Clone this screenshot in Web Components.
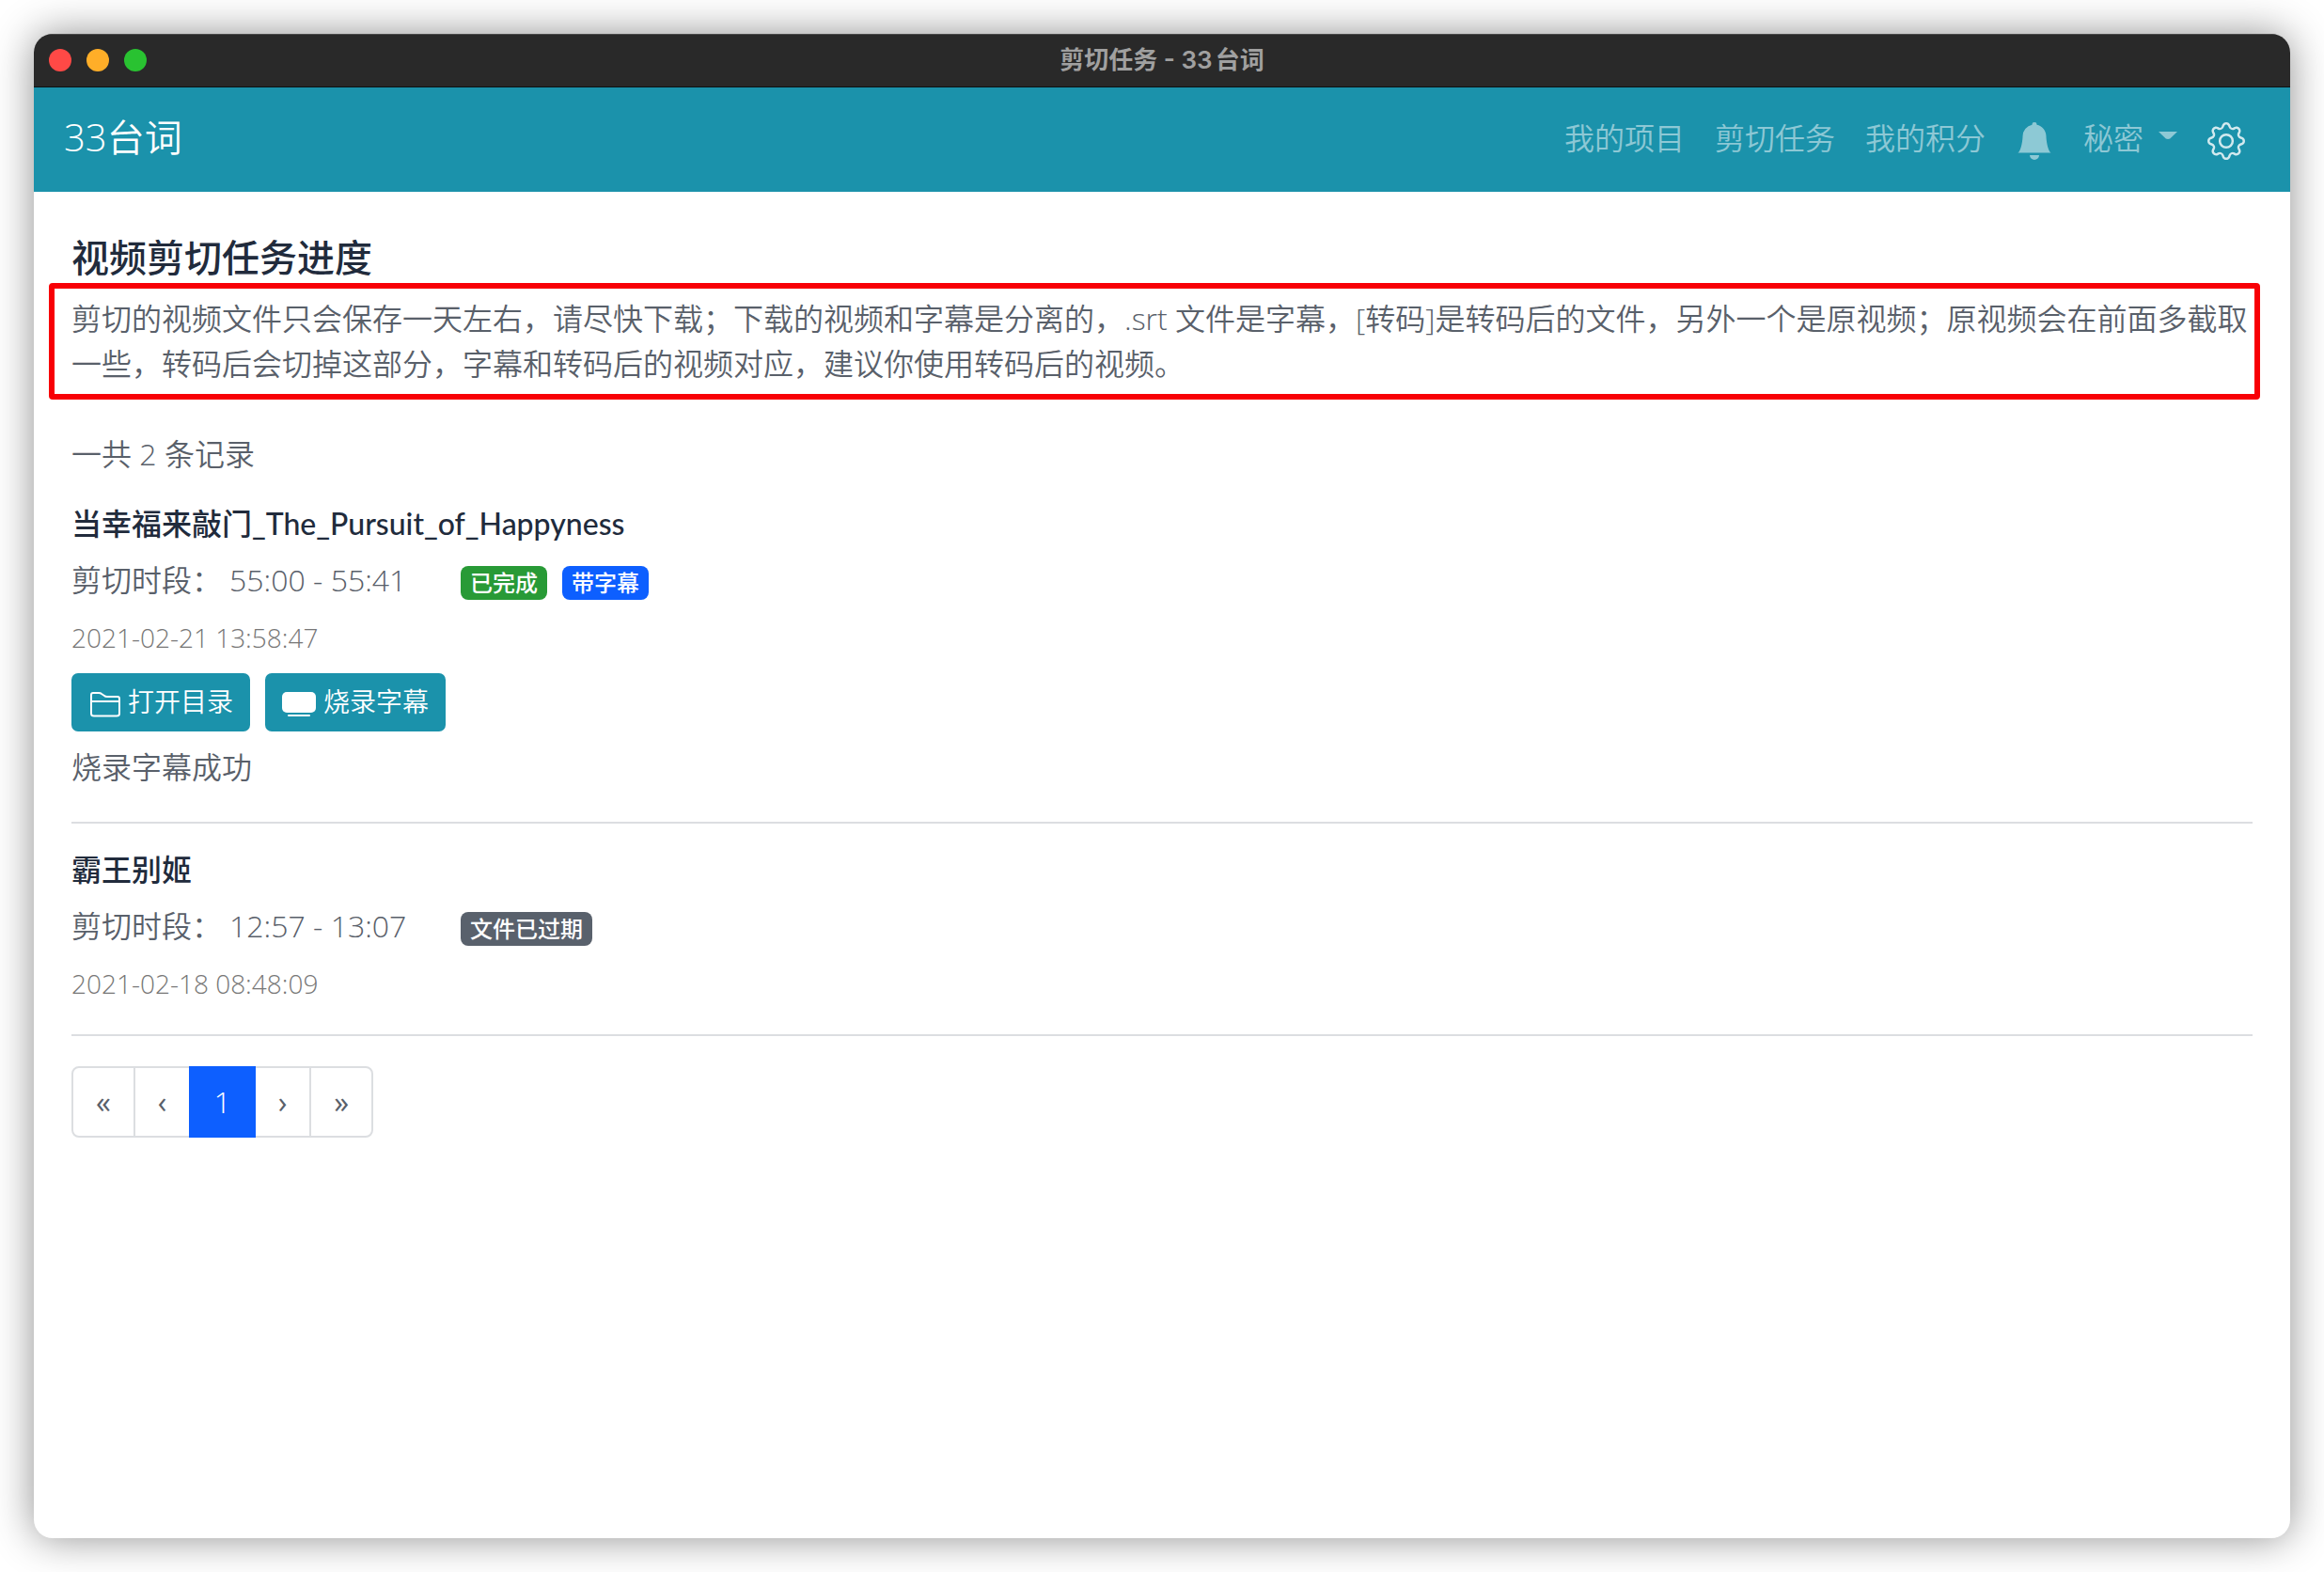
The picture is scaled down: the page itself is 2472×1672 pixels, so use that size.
<!DOCTYPE html>
<html lang="zh-CN">
<head>
<meta charset="utf-8">
<meta name="viewport" content="width=device-width, initial-scale=1">
<title>剪切任务 - 33台词</title>
<style>
  html, body { margin: 0; height: 100%; }
  body {
    --teal: #1b92ab;
    --ink: #212b3c;
    --body: #59606a;
    --blue: #0d5fff;
    --line: #dcdee1;
    --title: Lato, "Noto Sans CJK SC", sans-serif;
    background: #fff;
    color: var(--body);
    font-family: "Open Sans", "Noto Sans CJK SC", sans-serif;
    font-size: 32px;
    font-weight: 350;
    line-height: 48px;
  }
</style>
</head>
<body>
<app-window>
  <title-bar slot="bar">剪切任务 - 33台词</title-bar>
  <nav-bar brand="33台词">
    <nav-link>我的项目</nav-link>
    <nav-link>剪切任务</nav-link>
    <nav-link>我的积分</nav-link>
    <bell-link></bell-link>
    <user-menu>秘密</user-menu>
    <settings-button></settings-button>
  </nav-bar>
  <task-page>
    <span slot="heading">视频剪切任务进度</span>
    <marked-note slot="note">剪切的视频文件只会保存一天左右，请尽快下载；下载的视频和字幕是分离的，.srt 文件是字幕，[转码]是转码后的文件，另外一个是原视频；原视频会在前面多截取一些，转码后会切掉这部分，字幕和转码后的视频对应，建议你使用转码后的视频。</marked-note>
    <span slot="count">一共 2 条记录</span>
    <clip-task name="当幸福来敲门_The_Pursuit_of_Happyness" span="55:00 - 55:41" time="2021-02-21 13:58:47">
      <status-badge slot="badge" tone="done">已完成</status-badge>
      <status-badge slot="badge" tone="info">带字幕</status-badge>
      <action-button slot="action" icon="folder">打开目录</action-button>
      <action-button slot="action" icon="screen">烧录字幕</action-button>
      <span slot="result">烧录字幕成功</span>
    </clip-task>
    <clip-task name="霸王别姬" span="12:57 - 13:07" time="2021-02-18 08:48:09">
      <status-badge slot="badge" tone="expired">文件已过期</status-badge>
    </clip-task>
    <page-nav></page-nav>
  </task-page>
</app-window>

<script>
function define(name, html, setup) {
  const template = document.createElement('template');
  template.innerHTML = html;
  customElements.define(name, class extends HTMLElement {
    constructor() {
      super();
      this.attachShadow({ mode: 'open' }).append(template.content.cloneNode(true));
    }
    connectedCallback() {
      if (setup) setup(this, this.shadowRoot);
    }
  });
}

define('app-window', `
  <style>
    :host { display: flex; box-sizing: border-box; min-height: 100vh; padding: 36px; }
    .frame {
      flex: 1; min-width: 0; display: flex; flex-direction: column; overflow: hidden;
      border-radius: 20px; background: #fff; box-shadow: 0 0 44px rgba(0, 0, 0, .44);
    }
  </style>
  <div class="frame"><slot name="bar"></slot><slot></slot></div>`);

define('title-bar', `
  <style>
    :host { display: block; background: #292929; border-top: 1px solid #4a4a4a; border-bottom: 1px solid #0b1214; }
    header { box-sizing: border-box; display: grid; grid-template-columns: 1fr auto 1fr; align-items: center; height: 55px; padding: 0 16px 2px; }
    .lights { display: flex; gap: 16px; }
    button { width: 24px; height: 24px; padding: 0; border: 0; border-radius: 50%; background: var(--c); }
    .title { color: #a0a0a0; font: 600 26px/32px Inter, "Noto Sans CJK SC", sans-serif; text-autospace: normal; }
  </style>
  <header>
    <div class="lights">
      <button aria-label="关闭" style="--c:#ff4946"></button>
      <button aria-label="最小化" style="--c:#ffae28"></button>
      <button aria-label="缩放" style="--c:#29c231"></button>
    </div>
    <div class="title"><slot></slot></div>
  </header>`);

define('nav-bar', `
  <style>
    :host { display: block; background: var(--teal); }
    nav { display: flex; align-items: center; justify-content: space-between; height: 111px; padding: 0 48px 0 32px; }
    .brand { color: #fff; font-size: 40px; line-height: 60px; text-decoration: none; padding-bottom: 6px; }
    .items { display: flex; align-items: center; gap: 32px; padding-top: 3px; }
  </style>
  <nav>
    <a class="brand" href="#"></a>
    <div class="items"><slot></slot></div>
  </nav>`,
  (host, root) => { root.querySelector('.brand').textContent = host.getAttribute('brand'); });

define('nav-link', `
  <style>
    :host { display: block; }
    a { display: block; color: rgba(255, 255, 255, .5); text-decoration: none; padding-bottom: 7px; }
  </style>
  <a href="#"><slot></slot></a>`);

define('bell-link', `
  <style>
    :host { display: block; }
    a { display: block; color: rgba(255, 255, 255, .5); }
    svg { display: block; width: 40px; height: 40px; }
  </style>
  <a href="#" aria-label="通知"><svg viewBox="0 0 16 16" fill="currentColor"><path d="M8 16a2 2 0 0 0 2-2H6a2 2 0 0 0 2 2zm.995-14.901a1 1 0 1 0-1.99 0A5.002 5.002 0 0 0 3 6c0 1.098-.5 6-2 7h14c-1.500-1-2-5.902-2-7 0-2.420-1.720-4.440-4.005-4.901z"/></svg></a>`);

define('user-menu', `
  <style>
    :host { display: block; }
    button {
      display: flex; align-items: center; gap: 16px; padding: 0 0 7px; border: 0; background: none;
      color: rgba(255, 255, 255, .5); font: inherit;
    }
    svg { display: block; width: 20px; height: 8px; margin-bottom: 6px; }
  </style>
  <button aria-haspopup="true"><span><slot></slot></span><svg viewBox="0 0 20 8" fill="currentColor"><path d="M0 0H20L12.200 7.600Q10 8.400 7.800 7.600Z"/></svg></button>`);

define('settings-button', `
  <style>
    :host { display: block; }
    button { display: block; padding: 0; border: 0; background: none; color: rgba(255, 255, 255, .8); }
    svg { display: block; width: 40px; height: 40px; }
  </style>
  <button aria-label="设置"><svg viewBox="0 0 16 16" fill="currentColor">
    <path d="M8 4.754a3.246 3.246 0 1 0 0 6.492 3.246 3.246 0 0 0 0-6.492zM5.754 8a2.246 2.246 0 1 1 4.492 0 2.246 2.246 0 0 1-4.492 0z"/>
    <path d="M9.796 1.343c-.527-1.79-3.065-1.79-3.592 0l-.094.319a.873.873 0 0 1-1.255.52l-.292-.16c-1.64-.892-3.433.902-2.54 2.541l.159.292a.873.873 0 0 1-.52 1.255l-.319.094c-1.79.527-1.79 3.065 0 3.592l.319.094a.873.873 0 0 1 .52 1.255l-.16.292c-.892 1.64.901 3.434 2.541 2.54l.292-.159a.873.873 0 0 1 1.255.52l.094.319c.527 1.79 3.065 1.79 3.592 0l.094-.319a.873.873 0 0 1 1.255-.52l.292.16c1.64.893 3.434-.902 2.54-2.541l-.159-.292a.873.873 0 0 1 .52-1.255l.319-.094c1.79-.527 1.79-3.065 0-3.592l-.319-.094a.873.873 0 0 1-.52-1.255l.16-.292c.893-1.64-.902-3.433-2.541-2.54l-.292.159a.873.873 0 0 1-1.255-.52l-.094-.319zm-2.633.283c.246-.835 1.428-.835 1.674 0l.094.319a1.873 1.873 0 0 0 2.693 1.115l.291-.16c.764-.415 1.6.42 1.184 1.185l-.159.292a1.873 1.873 0 0 0 1.116 2.692l.318.094c.835.246.835 1.428 0 1.674l-.319.094a1.873 1.873 0 0 0-1.115 2.693l.16.291c.415.764-.42 1.6-1.185 1.184l-.291-.159a1.873 1.873 0 0 0-2.693 1.116l-.094.318c-.246.835-1.428.835-1.674 0l-.094-.319a1.873 1.873 0 0 0-2.692-1.115l-.292.16c-.764.415-1.6-.42-1.184-1.185l.159-.291A1.873 1.873 0 0 0 1.945 8.930l-.319-.094c-.835-.246-.835-1.428 0-1.674l.319-.094A1.873 1.873 0 0 0 3.060 4.377l-.16-.292c-.415-.764.42-1.6 1.185-1.184l.292.159a1.873 1.873 0 0 0 2.692-1.115l.094-.319z"/>
  </svg></button>`);

define('task-page', `
  <style>
    :host { display: block; padding: 46px 40px; }
    h1 { margin: 0 0 17px; color: var(--ink); font-size: 40px; font-weight: 500; line-height: 48px; }
    .count { margin: 48px 0 26px; }
  </style>
  <main>
    <h1><slot name="heading"></slot></h1>
    <slot name="note"></slot>
    <p class="count"><slot name="count"></slot></p>
    <slot></slot>
  </main>`);

define('marked-note', `
  <style>
    :host { display: block; position: relative; }
    p { margin: 0; }
    .mark { position: absolute; inset: -14px -8px -14px -24px; border: 6px solid #f80006; border-radius: 4px; pointer-events: none; }
  </style>
  <p><slot></slot></p>
  <div class="mark"></div>`);

define('clip-task', `
  <style>
    :host { display: block; padding-bottom: 30px; margin-bottom: 25px; border-bottom: 2px solid var(--line); }
    h2 { margin: 0 0 12px; color: var(--ink); font-family: var(--title); font-size: 32px; font-weight: 500; line-height: 48px; }
    .row { display: flex; align-items: center; height: 48px; margin-bottom: 13px; }
    .range { display: flex; gap: 8px; width: 414px; }
    .badges { display: flex; gap: 16px; padding-top: 6px; }
    time { display: block; color: #777; font-size: 28px; }
    .actions { display: flex; gap: 16px; }
    .on .actions { margin: 14px 0; }
    .on .result { margin-bottom: 4px; }
  </style>
  <article>
    <h2></h2>
    <div class="row">
      <div class="range"><span>剪切时段：</span><span class="span"></span></div>
      <div class="badges"><slot name="badge"></slot></div>
    </div>
    <time></time>
    <div class="actions"><slot name="action"></slot></div>
    <div class="result"><slot name="result"></slot></div>
  </article>`,
  (host, root) => {
    root.querySelector('h2').textContent = host.getAttribute('name');
    root.querySelector('.span').textContent = host.getAttribute('span');
    root.querySelector('time').textContent = host.getAttribute('time');
    root.querySelector('article').classList.toggle('on', !!host.querySelector('[slot=action]'));
  });

define('status-badge', `
  <style>
    :host { display: block; padding: 0 10px; border-radius: 8px; color: #fff; font-size: 24px; font-weight: 500; line-height: 36px; }
    :host([tone=done]) { background: #289a36; }
    :host([tone=info]) { background: var(--blue); }
    :host([tone=expired]) { background: #59616c; }
  </style>
  <slot></slot>`);

define('action-button', `
  <style>
    :host { display: block; }
    button {
      display: flex; align-items: center; gap: 8px; height: 62px; padding: 0 18px; border: 0; border-radius: 7px;
      background: var(--teal); color: #fff; font: inherit; font-size: 28px; line-height: 42px;
    }
    svg { display: none; height: 28px; margin-top: 4px; }
    :host([icon=folder]) .folder, :host([icon=screen]) .screen { display: block; }
    .label { padding-bottom: 2px; }
  </style>
  <button>
    <svg class="folder" width="34" height="28" viewBox="0 0 34 28" fill="none" stroke="currentColor" stroke-width="2" stroke-linejoin="round"><path d="M3 11V4Q3 2 5 2H11Q13 2 14 3L17 5Q18 6 20 6H31Q33 6 33 8V24Q33 26.500 30 26.500H6Q3 26.500 3 24V11M3 11H33"/></svg>
    <svg class="screen" width="36" height="28" viewBox="0 0 36 28" fill="currentColor"><rect y="1" width="36" height="22" rx="5"/><rect x="6" y="25" width="24" height="2" rx="1"/></svg>
    <span class="label"><slot></slot></span>
  </button>`);

define('page-nav', `
  <style>
    :host { display: block; padding-top: 7px; }
    ul { display: flex; margin: 0; padding: 0; list-style: none; }
    a {
      display: block; box-sizing: border-box; height: 76px; padding: 12px 24px; border: 2px solid var(--line);
      color: inherit; font-weight: 400; text-decoration: none;
    }
    li + li a { margin-left: -2px; }
    li:first-child a { border-radius: 8px 0 0 8px; }
    li:last-child a { border-radius: 0 8px 8px 0; }
    a[aria-current] {
      position: relative; background: var(--blue); border-color: var(--blue);
      color: #fff; font-weight: 350;
    }
  </style>
  <nav aria-label="分页"><ul>
    <li><a href="#">«</a></li>
    <li><a href="#">‹</a></li>
    <li><a href="#" aria-current="page">1</a></li>
    <li><a href="#">›</a></li>
    <li><a href="#">»</a></li>
  </ul></nav>`);
</script>
</body>
</html>
